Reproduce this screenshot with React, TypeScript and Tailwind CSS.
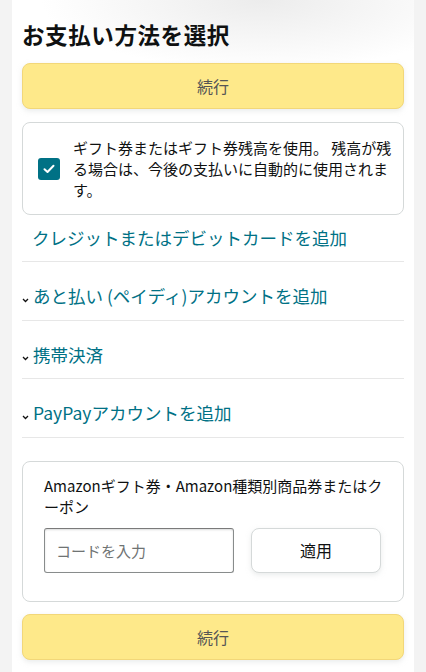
import React from "react";

const font = { fontFamily: '"Noto Sans CJK JP", "Noto Sans", sans-serif' };

function Chevron() {
  return (
    <svg width="7" height="5" viewBox="0 0 7 5" className="mt-[8px] mr-[4px] shrink-0">
      <path d="M1 1 L3.5 3.5 L6 1" fill="none" stroke="#111" strokeWidth="1.3" />
    </svg>
  );
}

function Row({ label }: { label: string }) {
  return (
    <div className="flex h-[58.5px] items-center border-b border-[#e7e7e7] pt-[11px]">
      <Chevron />
      <span className="text-[17.5px] text-[#007185]">{label}</span>
    </div>
  );
}

export default function App() {
  return (
    <div className="min-h-[672px] w-[426px] bg-[#f3f3f3] text-[#0f1111]" style={font}>
      <div className="mx-[12px] min-h-[672px] bg-white bg-[radial-gradient(ellipse_220px_70px_at_62%_0%,#ececec,#ffffff)] px-[10px] pt-[18px]">
        <h1 className="text-[22.5px] font-bold leading-[32px] tracking-[0.6px]">お支払い方法を選択</h1>

        <button className="mt-[13px] flex h-[46px] w-full items-center justify-center rounded-[8px] border border-[#f2d779] bg-[#fee98a] text-[16px] text-[#555] shadow-[0_2px_5px_rgba(213,217,217,0.5)]">
          続行
        </button>

        <div className="mt-[13px] flex items-center rounded-[8px] border border-[#d5d9d9] py-[14px] pl-[15px] pr-[10px]">
          <div className="flex h-[22px] w-[22px] shrink-0 items-center justify-center rounded-[3px] bg-[#007185]">
            <svg width="12" height="10" viewBox="0 0 12 10">
              <path d="M1.5 5.2 L4.5 8 L10.5 1.8" fill="none" stroke="#fff" strokeWidth="2" strokeLinecap="round" strokeLinejoin="round" />
            </svg>
          </div>
          <p className="ml-[13px] text-[15px] leading-[21px]">
            ギフト券またはギフト券残高を使用。 残高が残る場合は、今後の支払いに自動的に使用されます。
          </p>
        </div>

        <div className="flex h-[47px] items-center border-b border-[#e7e7e7] pl-[10px]">
          <span className="text-[17.5px] text-[#007185]">クレジットまたはデビットカードを追加</span>
        </div>
        <Row label="あと払い (ペイディ)アカウントを追加" />
        <Row label="携帯決済" />
        <Row label="PayPayアカウントを追加" />

        <div className="mt-[23px] rounded-[8px] border border-[#d5d9d9] pb-[28px] pl-[21px] pr-[12px] pt-[13px]">
          <p className="text-[15px] leading-[21px] [line-break:anywhere]">
            Amazonギフト券・Amazon種類別商品券またはクーポン
          </p>
          <div className="mt-[11px] flex gap-[17px]">
            <input
              placeholder="コードを入力"
              className="h-[45px] w-[190px] rounded-[3px] border border-[#888c8c] border-t-[#7a7a7a] px-[11px] text-[15px] shadow-[inset_0_1px_2px_rgba(15,17,17,0.15)] outline-none placeholder:text-[#6f7373]"
              style={font}
            />
            <button className="h-[45px] w-[130px] rounded-[8px] border border-[#d5d9d9] bg-white text-[16px] shadow-[0_2px_5px_rgba(213,217,217,0.5)]">
              適用
            </button>
          </div>
        </div>

        <button className="mt-[12px] flex h-[46px] w-full items-center justify-center rounded-[8px] border border-[#f2d779] bg-[#fee98a] text-[16px] text-[#555] shadow-[0_2px_5px_rgba(213,217,217,0.5)]">
          続行
        </button>
      </div>
    </div>
  );
}
